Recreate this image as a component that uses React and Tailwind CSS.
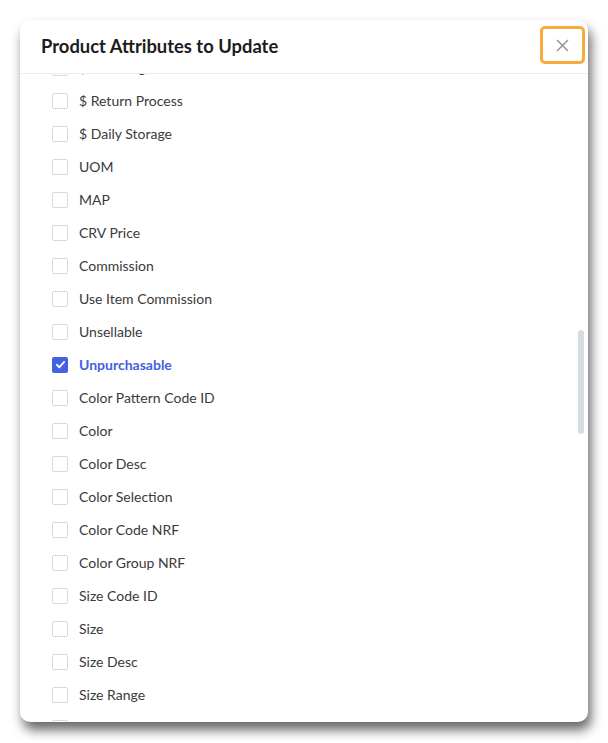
import React, { useLayoutEffect, useRef } from "react";

const items = [
  "$ Handling",
  "$ Return Process",
  "$ Daily Storage",
  "UOM",
  "MAP",
  "CRV Price",
  "Commission",
  "Use Item Commission",
  "Unsellable",
  "Unpurchasable",
  "Color Pattern Code ID",
  "Color",
  "Color Desc",
  "Color Selection",
  "Color Code NRF",
  "Color Group NRF",
  "Size Code ID",
  "Size",
  "Size Desc",
  "Size Range",
  "Size Group",
  "Size Selection",
];

function Row({ label, checked }) {
  return (
    <div className="flex h-[33px] items-center pl-[32px]">
      {checked ? (
        <span className="flex h-[16px] w-[16px] items-center justify-center rounded-[2px] bg-[#4361e0]">
          <svg width="11" height="11" viewBox="0 0 12 12" fill="none">
            <path d="M2 6.3 L4.8 9 L10 3.2" stroke="white" strokeWidth="2" strokeLinecap="round" strokeLinejoin="round" />
          </svg>
        </span>
      ) : (
        <span className="h-[16px] w-[16px] rounded-[2px] border border-[#d9d9d9] bg-white" />
      )}
      <span
        className={
          "ml-[11px] text-[14px] leading-none " +
          (checked ? "font-bold text-[#4361e0]" : "text-[#3a3a3a]")
        }
      >
        {label}
      </span>
    </div>
  );
}

export default function App() {
  const ref = useRef(null);
  useLayoutEffect(() => {
    if (ref.current) ref.current.scrollTop = 23;
  }, []);
  return (
    <div
      className="min-h-[743px] w-[608px] bg-white pt-[20px] pl-[20px]"
      style={{ fontFamily: 'Lato, "Noto Sans", sans-serif' }}
    >
      <div className="relative flex h-[702px] w-[568px] flex-col overflow-hidden rounded-[10px] bg-white shadow-[3px_8px_12px_rgba(0,0,0,0.6)]">
        <div className="flex h-[54px] shrink-0 items-center justify-between border-b border-[#ececec] pl-[21px] pr-[3px]">
          <h1 className="text-[18.4px] font-bold text-[#1c1c1c]">Product Attributes to Update</h1>
          <button className="-mt-[3px] flex h-[38px] w-[45px] items-center justify-center rounded-[5px] border-[3px] border-[#f7ab3c] bg-white">
            <svg width="13" height="13" viewBox="0 0 13 13">
              <path d="M1 1 L12 12 M12 1 L1 12" stroke="#8e8e8e" strokeWidth="1.4" />
            </svg>
          </button>
        </div>
        <div ref={ref} className="flex-1 overflow-hidden">
          {items.map((l) => (
            <Row key={l} label={l} checked={l === "Unpurchasable"} />
          ))}
        </div>
        <div className="absolute top-[310px] right-[4px] h-[104px] w-[6px] rounded-full bg-[#d6dde0]" />
      </div>
    </div>
  );
}
